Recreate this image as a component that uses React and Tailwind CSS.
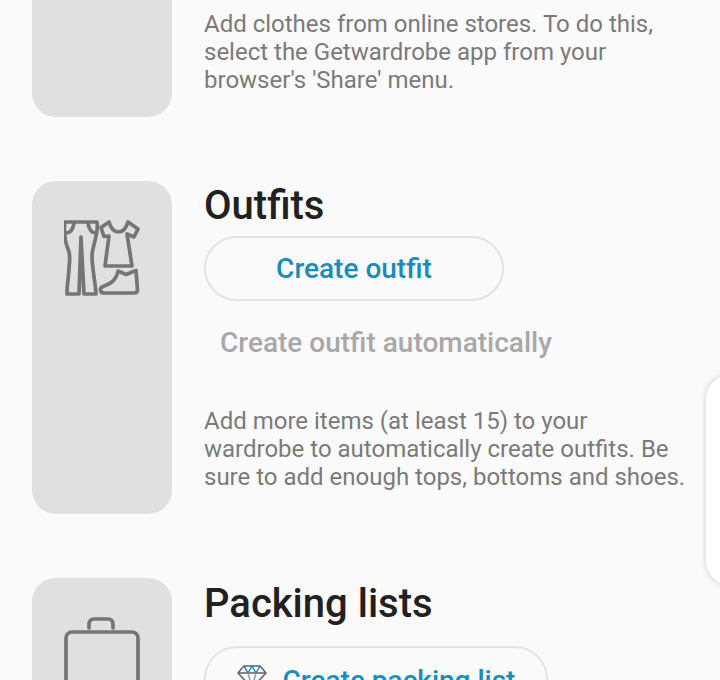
const font = { fontFamily: 'Roboto, sans-serif' };

function OutfitIcon() {
  return (
    <svg width="76" height="78" viewBox="0 0 76 78" fill="none" stroke="#757575" strokeWidth="3.7" strokeLinejoin="round" strokeLinecap="round">
      <path d="M1 2H33C34 8 33 11 32 16C31 22 28 30 28 36C28 48 31 60 32 74H20L17 17L15 74H3C3 62 5 56 5 48C6 40 6 36 5 32C3 26 1 22 1 16C0 10 0 7 1 2Z" />
      <path d="M2 13C6 13 9 10 10 3M32 13C28 13 25 10 24 3" />
      <path d="M45 2C47 9 50 12 54.5 12C59 12 62 9 64 2L74 9L70 17L63 14L68 46H41L45 16L40 16.5L37 7.5Z" />
      <path d="M54 51L62 54.5L72 50.5L73.5 70C73.5 72 72 73 70 73H40C36 73 35 68 39 66.500C44 64.500 52 62 54 51Z" />
    </svg>
  );
}

function SuitcaseIcon() {
  return (
    <svg width="76" height="70" viewBox="0 0 76 70" fill="none" stroke="#757575" strokeWidth="3.7" strokeLinecap="round">
      <path d="M25 11V8C25 4 27 2 30 2H44C47 2 49 4 49 8V11" />
      <rect x="2" y="15" width="72" height="70" rx="6" />
    </svg>
  );
}

function DiamondIcon() {
  return (
    <svg width="30" height="24" viewBox="0 0 30 24" fill="none" strokeWidth="1.5" strokeLinejoin="round">
      <path d="M7 1H23L29 8L15 23L1 8Z" stroke="#616161" />
      <path d="M1 8H29" stroke="#616161" />
      <path d="M7 1L11 8L15 1L19 8L23 1" stroke="#1a8cba" />
      <path d="M11 8L15 23L19 8" stroke="#9e9e9e" />
    </svg>
  );
}

export default function App() {
  return (
    <div style={font} className="relative h-[680px] w-[720px] overflow-hidden bg-[#fafafa] flex flex-col gap-[64px]">
      <section className="flex gap-[32px] pl-[32px]">
        <div className="h-[117px] w-[140px] shrink-0 rounded-b-[24px] bg-[#e0e0e0]" />
        <p className="pt-[10px] text-[24px] leading-[28px] text-[#7a7a7a]">
          Add clothes from online stores. To do this,<br />
          select the Getwardrobe app from your<br />
          browser's 'Share' menu.
        </p>
      </section>

      <section className="flex gap-[32px] pl-[32px]">
        <div className="flex h-[333px] w-[140px] shrink-0 justify-center rounded-[24px] bg-[#e0e0e0] pt-[39px]">
          <OutfitIcon />
        </div>
        <div className="flex flex-col items-start">
          <h2 className="mt-[1px] text-[40px] leading-[48px] font-medium text-[#212121]">Outfits</h2>
          <button className="mt-[6px] flex h-[65px] w-[300px] items-center justify-center rounded-full border-2 border-[#e3e3e3] text-[28px] font-medium text-[#1a8cba]">
            Create outfit
          </button>
          <div className="mt-[25px] pl-[16px] text-[28px] leading-[34px] font-medium text-[#a8a8a8]">Create outfit automatically</div>
          <p className="mt-[47px] text-[24px] leading-[28px] whitespace-nowrap text-[#7a7a7a]">
            Add more items (at least 15) to your<br />
            wardrobe to automatically create outfits. Be<br />
            sure to add enough tops, bottoms and shoes.
          </p>
        </div>
      </section>

      <section className="flex gap-[32px] pl-[32px]">
        <div className="flex h-[300px] w-[140px] shrink-0 justify-center rounded-[24px] bg-[#e0e0e0] pt-[39px]">
          <SuitcaseIcon />
        </div>
        <div className="flex flex-col items-start">
          <h2 className="mt-[2px] text-[40px] leading-[48px] font-medium text-[#212121]">Packing lists</h2>
          <button className="mt-[18px] flex h-[66px] w-[344px] items-start justify-center gap-[16px] rounded-full border-2 border-[#e3e3e3] pt-[17px] text-[28px] leading-[32px] font-medium text-[#1a8cba]">
            <DiamondIcon />
            Create packing list
          </button>
        </div>
      </section>

      <div className="absolute top-[375px] left-[706px] h-[210px] w-[40px] rounded-l-[24px] bg-white shadow-[0_0_6px_rgba(0,0,0,0.18)]" />
    </div>
  );
}
